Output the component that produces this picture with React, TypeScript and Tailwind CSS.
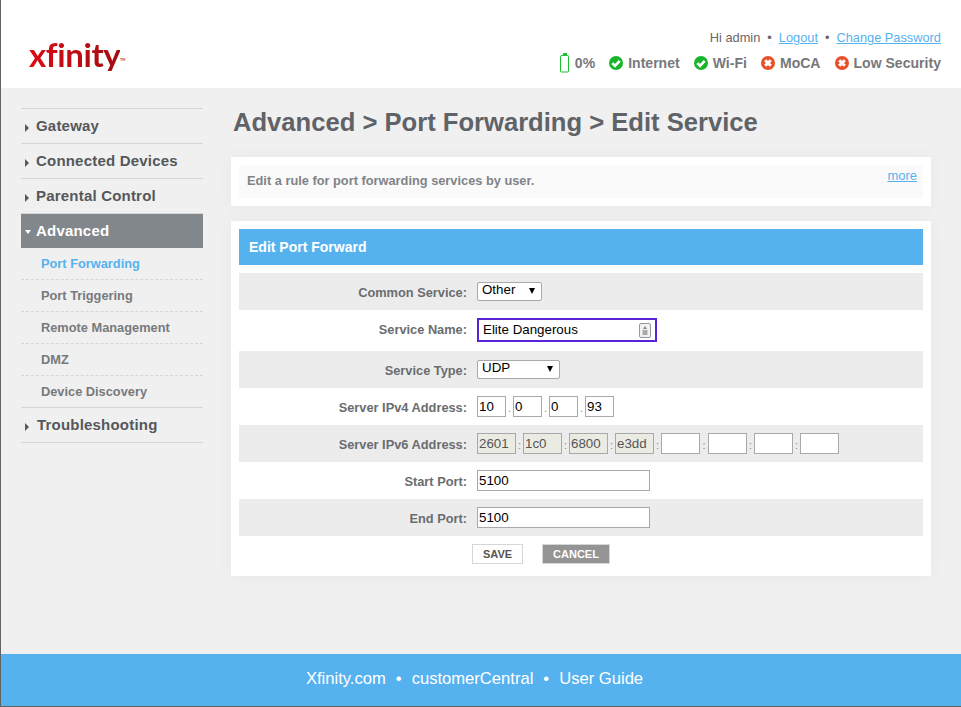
const SANS = "font-['Liberation_Sans',Arial,sans-serif]";

function Check() {
  return (
    <svg width="14" height="14" viewBox="0 0 14 14" className="shrink-0">
      <circle cx="7" cy="7" r="7" fill="#18b52b" />
      <path d="M3.3 7.1 L6 9.8 L10.7 4.8" fill="none" stroke="#fff" strokeWidth="2.7" />
    </svg>
  );
}

function Cross() {
  return (
    <svg width="14" height="14" viewBox="0 0 14 14" className="shrink-0">
      <circle cx="7" cy="7" r="7" fill="#e8502a" />
      <path d="M4.2 4.2 L9.8 9.8 M9.8 4.2 L4.2 9.8" fill="none" stroke="#fff" strokeWidth="3" />
    </svg>
  );
}

function Battery() {
  return (
    <svg width="10" height="20" viewBox="0 0 10 20" className="shrink-0">
      <rect x="3" y="0" width="4" height="3" fill="#19c22c" />
      <rect x="0.5" y="2.5" width="8" height="16.5" rx="1" fill="#fff" stroke="#19c22c" strokeWidth="1" />
    </svg>
  );
}

function Status({ icon, label }: { icon: React.ReactNode; label: string }) {
  return (
    <div className="flex items-center gap-[5px]">
      {icon}
      <span>{label}</span>
    </div>
  );
}

function NavItem({ label, open, active, wide }: { label: string; open?: boolean; active?: boolean; wide?: boolean }) {
  return (
    <div
      className={
        active
          ? "flex h-[35px] items-center border-t border-[#d6d6d6] bg-[#82878c] pl-[4px] text-white"
          : "flex h-[35px] items-center border-t border-[#d6d6d6] pl-[4px] text-[#55585b]"
      }
    >
      <span className={(wide ? "w-[12px] " : "w-[11px] ") + "flex justify-start"}>
        {open ? (
          <span className="mt-[2px] h-0 w-0 border-x-[3.5px] border-t-[4px] border-x-transparent border-t-white" />
        ) : (
          <span className="mt-[3px] h-0 w-0 border-y-[4px] border-l-[4px] border-y-transparent border-l-[#55585b]" />
        )}
      </span>
      <span className="-mt-[2px] text-[15px] leading-none font-bold tracking-[0.2px]">{label}</span>
    </div>
  );
}

function SubItem({ label, active, last }: { label: string; active?: boolean; last?: boolean }) {
  return (
    <div
      className={
        (last ? "h-[31px] " : "h-[32px] border-b border-dashed border-[#d6d6d6] ") +
        (active ? "text-[#56b2ef] " : "text-[#777a7d] ") +
        "flex items-center pl-[20px] text-[12.8px] font-bold"
      }
    >
      {label}
    </div>
  );
}

function Row({
  label,
  shaded,
  children,
  h = "h-[37px]",
  lift,
}: {
  label: string;
  shaded?: boolean;
  children: React.ReactNode;
  h?: string;
  lift?: boolean;
}) {
  return (
    <div className={(shaded ? "bg-[#ececec] " : "bg-white ") + h + " flex items-center"}>
      <div className={(lift ? "pt-0 " : "pt-[4px] ") + "w-[228px] text-right text-[12.8px] leading-none font-bold text-[#6a6d70]"}>
        {label}
      </div>
      <div className="ml-[10px] flex items-center">{children}</div>
    </div>
  );
}

function Select({ value, w }: { value: string; w: string }) {
  return (
    <div className={w + " flex h-[19px] items-center justify-between rounded-[2px] border border-[#a9a9a9] bg-white pr-[6px] pl-[4px] text-[13.33px] leading-none text-black"}>
      <span className="-mt-[3px]">{value}</span>
      <span className="-mt-[1px] h-0 w-0 border-x-[3.5px] border-t-[6px] border-x-transparent border-t-black" />
    </div>
  );
}

function Box({ value, w, disabled }: { value?: string; w: string; disabled?: boolean }) {
  return (
    <div
      className={
        w +
        (disabled ? " bg-[#ebebe4] text-[#545454]" : " bg-white text-black") +
        " flex h-[21px] items-center border border-[#a9a9a9] pl-[1px] text-[13.33px] leading-none"
      }
    >
      {value}
    </div>
  );
}

function Sep({ c, w }: { c: string; w: string }) {
  return <span className={w + " pt-[3px] text-center text-[11px] leading-none text-[#888]"}>{c}</span>;
}

export default function App() {
  return (
    <div className={SANS + " flex h-[707px] w-[961px] flex-col overflow-hidden border-b border-l border-[#5f6467] bg-[#f0f0f0]"}>
      <header className="flex h-[88px] shrink-0 items-start justify-between bg-white">
        <div className="mt-[37px] ml-[28px] flex items-start font-['Lato',sans-serif] text-[33px] leading-[34px] font-bold tracking-[-0.4px]">
          <span className="bg-gradient-to-r from-[#dc0a14] to-[#a30d12] bg-clip-text text-transparent">xfinity</span>
          <span className="mt-[22px] text-[3px] leading-none tracking-normal text-[#b01015]">TM</span>
        </div>
        <div className="mt-[31px] mr-[20px] flex flex-col items-end">
          <div className="flex h-[15px] items-center text-[12.8px] leading-none text-[#6a6567]">
            <span>Hi admin</span>
            <span className="mx-[7px]">•</span>
            <span className="text-[#56b2ef] underline">Logout</span>
            <span className="mx-[7px]">•</span>
            <span className="text-[#56b2ef] underline">Change Password</span>
          </div>
          <div className="mt-[7px] flex h-[20px] items-center gap-[14px] text-[14px] leading-none font-bold tracking-[0.03px] text-[#77787a]">
            <Status icon={<Battery />} label="0%" />
            <Status icon={<Check />} label="Internet" />
            <Status icon={<Check />} label="Wi-Fi" />
            <Status icon={<Cross />} label="MoCA" />
            <Status icon={<Cross />} label="Low Security" />
          </div>
        </div>
      </header>

      <div className="flex min-h-0 flex-1">
        <nav className="mt-[20px] ml-[20px] w-[182px] shrink-0">
          <NavItem label="Gateway" />
          <NavItem label="Connected Devices" />
          <NavItem label="Parental Control" />
          <NavItem label="Advanced" open active />
          <SubItem label="Port Forwarding" active />
          <SubItem label="Port Triggering" />
          <SubItem label="Remote Management" />
          <SubItem label="DMZ" />
          <SubItem label="Device Discovery" last />
          <div className="border-b border-[#d6d6d6]">
            <NavItem label="Troubleshooting" wide />
          </div>
        </nav>

        <main className="ml-[28px] w-[700px] shrink-0">
          <h1 className="mt-[18px] ml-[2px] text-[25.6px] leading-[32px] font-bold text-[#5f6367]">
            Advanced &gt; Port Forwarding &gt; Edit Service
          </h1>
          <section className="mt-[19px] h-[49px] bg-white p-[8px] shadow-[0_0_18px_rgba(0,0,0,0.04)]">
            <div className="flex h-[33px] justify-between bg-[#fafafa]">
              <p className="mt-[10px] ml-[8px] text-[12.8px] leading-none font-bold text-[#808488]">
                Edit a rule for port forwarding services by user.
              </p>
              <span className="mt-[4px] mr-[6px] text-[13px] leading-none text-[#56b2ef] underline">more</span>
            </div>
          </section>
          <section className="mt-[15px] h-[355px] bg-white p-[8px] shadow-[0_0_18px_rgba(0,0,0,0.04)]">
            <div className="flex h-[36px] items-center bg-[#56b2ef] pt-[1px] pl-[10px] text-[14px] font-bold text-white">
              Edit Port Forward
            </div>
            <div className="mt-[8px]">
              <Row label="Common Service:" shaded>
                <Select value="Other" w="w-[65px]" />
              </Row>
              <Row label="Service Name:" h="h-[41px]" lift>
                <div className="-mt-[1px] flex h-[24px] w-[180px] items-center justify-between border-2 border-[#5a22d6] bg-white pr-[4px] pl-[4px] text-[13.33px] leading-none text-black">
                  <span className="-mt-[1px]">Elite Dangerous</span>
                  <svg width="12" height="15" viewBox="0 0 12 15">
                    <rect x="0.5" y="0.5" width="11" height="14" rx="1.5" fill="#f2f2f2" stroke="#999" />
                    <path d="M6 3 L8 6 H4 Z" fill="#888" />
                    <rect x="3.5" y="7" width="5" height="5" fill="#aaa" />
                  </svg>
                </div>
              </Row>
              <Row label="Service Type:" shaded>
                <Select value="UDP" w="w-[83px]" />
              </Row>
              <Row label="Server IPv4 Address:">
                <Box value="10" w="w-[29px]" />
                <Sep c="." w="w-[7px]" />
                <Box value="0" w="w-[29px]" />
                <Sep c="." w="w-[7px]" />
                <Box value="0" w="w-[29px]" />
                <Sep c="." w="w-[7px]" />
                <Box value="93" w="w-[29px]" />
              </Row>
              <Row label="Server IPv6 Address:" shaded>
                <Box value="2601" w="w-[39px]" disabled />
                <Sep c=":" w="w-[7px]" />
                <Box value="1c0" w="w-[39px]" disabled />
                <Sep c=":" w="w-[7px]" />
                <Box value="6800" w="w-[39px]" disabled />
                <Sep c=":" w="w-[7px]" />
                <Box value="e3dd" w="w-[39px]" disabled />
                <Sep c=":" w="w-[7px]" />
                <Box w="w-[39px]" />
                <Sep c=":" w="w-[8px]" />
                <Box w="w-[39px]" />
                <Sep c=":" w="w-[7px]" />
                <Box w="w-[39px]" />
                <Sep c=":" w="w-[7px]" />
                <Box w="w-[39px]" />
              </Row>
              <Row label="Start Port:">
                <Box value="5100" w="w-[173px]" />
              </Row>
              <Row label="End Port:" shaded>
                <Box value="5100" w="w-[173px]" />
              </Row>
            </div>
            <div className="mt-[8px] ml-[233px] flex gap-[19px] text-[11px] leading-none font-bold">
              <div className="flex h-[20px] w-[51px] items-center justify-center border border-[#d6d6d6] bg-white text-[#555]">SAVE</div>
              <div className="flex h-[20px] w-[68px] items-center justify-center border border-[#d6d6d6] bg-[#949494] text-white">CANCEL</div>
            </div>
          </section>
        </main>
      </div>

      <footer className="flex h-[52px] shrink-0 items-center justify-center gap-[10px] bg-[#56b2ef] pr-[13px] pb-[2px] text-[16.6px] leading-none text-white">
        <span>Xfinity.com</span>
        <span>•</span>
        <span>customerCentral</span>
        <span>•</span>
        <span>User Guide</span>
      </footer>
    </div>
  );
}
